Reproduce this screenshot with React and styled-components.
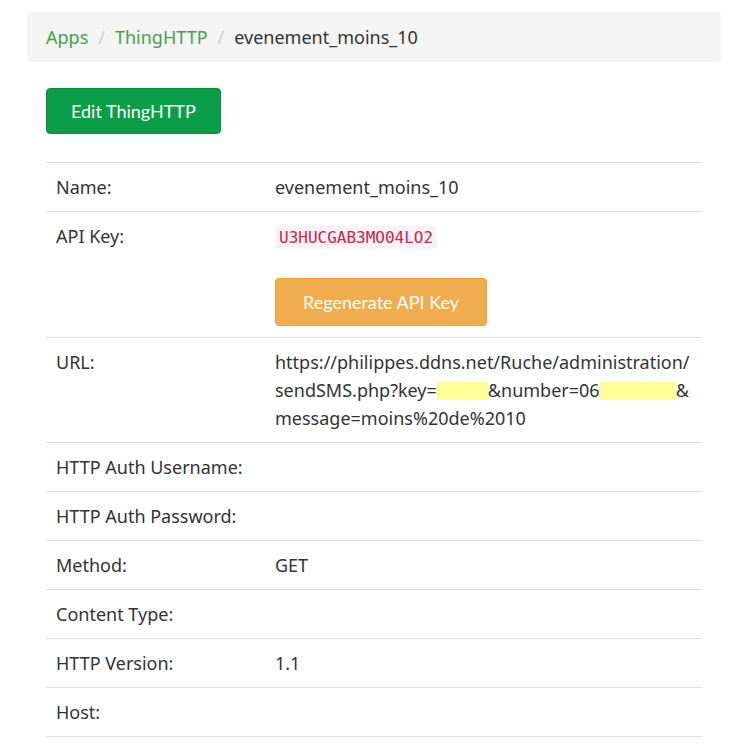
import React from 'react';
import styled, { createGlobalStyle } from 'styled-components';

const Global = createGlobalStyle`
  body {
    margin: 0;
    background: #ffffff;
    font-family: "Noto Sans", "Liberation Sans", sans-serif;
    color: #333333;
  }
`;

const Page = styled.div`
  width: 744px;
  padding: 12px 0 0 27px;
  box-sizing: border-box;
`;

const Breadcrumb = styled.ol`
  list-style: none;
  margin: 0;
  width: 694px;
  height: 50px;
  box-sizing: border-box;
  padding: 0 19px;
  display: flex;
  align-items: center;
  background: #f4f4f4;
  border-radius: 4px;
  font-size: 18px;
`;

const Crumb = styled.li`
  color: ${(p) => (p.$active ? '#333333' : '#43a348')};
`;

const Separator = styled.li`
  color: #cccccc;
  padding: 0 10px;
`;

const Content = styled.div`
  padding: 26px 0 0 19px;
  width: 656px;
`;

const Button = styled.button`
  font-family: "Lato", "Liberation Sans", sans-serif;
  font-size: 18px;
  color: #ffffff;
  background: ${(p) => p.$bg};
  border: 1px solid ${(p) => p.$border};
  border-radius: 4px;
  height: ${(p) => p.$h}px;
  padding: 0 ${(p) => p.$px}px;
  cursor: pointer;
`;

const Table = styled.div`
  margin-top: 28px;
  border-top: 1px solid #dddddd;
`;

const Row = styled.div`
  display: grid;
  grid-template-columns: 219px 1fr;
  border-bottom: 1px solid #dddddd;
`;

const Cell = styled.div`
  padding: 10px;
  font-size: 18px;
  line-height: 28px;
`;

const Code = styled.code`
  font-family: "DejaVu Sans Mono", "Liberation Mono", monospace;
  font-size: 16px;
  color: #c7254e;
  background: #f9f2f4;
  padding: 2px 4px;
  border-radius: 4px;
`;

const KeyBlock = styled.div`
  display: flex;
  flex-direction: column;
  align-items: flex-start;
  gap: 26px;
  padding-bottom: 1px;
`;

const Line = styled.span`
  display: block;
  white-space: nowrap;
`;

const Redacted = styled.span`
  display: inline-block;
  width: ${(p) => p.$w}px;
  height: 18px;
  vertical-align: -3px;
  background: #ffff99;
`;

const rows = [
  ['Name:', 'evenement_moins_10'],
  ['API Key:', 'apikey'],
  ['URL:', 'url'],
  ['HTTP Auth Username:', ''],
  ['HTTP Auth Password:', ''],
  ['Method:', 'GET'],
  ['Content Type:', ''],
  ['HTTP Version:', '1.1'],
  ['Host:', ''],
];

const renderValue = (v) => {
  if (v === 'apikey') {
    return (
      <KeyBlock>
        <div><Code>U3HUCGAB3MO04LO2</Code></div>
        <Button $bg="#f0ad4e" $border="#eea236" $h={48} $px={27}>Regenerate API Key</Button>
      </KeyBlock>
    );
  }
  if (v === 'url') {
    return (
      <>
        <Line>https://philippes.ddns.net/Ruche/administration/</Line>
        <Line>sendSMS.php?key=<Redacted $w={51} />&amp;number=06<Redacted $w={76} />&amp;</Line>
        <Line>message=moins%20de%2010</Line>
      </>
    );
  }
  return v;
};

export default function App() {
  return (
    <Page>
      <Global />
      <Breadcrumb>
        <Crumb>Apps</Crumb>
        <Separator>/</Separator>
        <Crumb>ThingHTTP</Crumb>
        <Separator>/</Separator>
        <Crumb $active>evenement_moins_10</Crumb>
      </Breadcrumb>
      <Content>
        <Button $bg="#0b9e48" $border="#0a8f41" $h={46} $px={24}>Edit ThingHTTP</Button>
        <Table>
          {rows.map(([label, value]) => (
            <Row key={label}>
              <Cell>{label}</Cell>
              <Cell>{renderValue(value)}</Cell>
            </Row>
          ))}
        </Table>
      </Content>
    </Page>
  );
}
